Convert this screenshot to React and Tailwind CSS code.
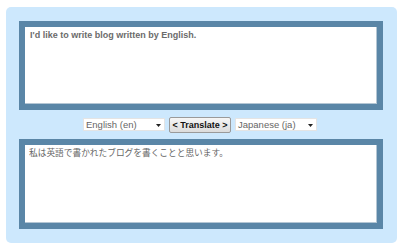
const LANGS_FROM = 'English (en)';
const LANGS_TO = 'Japanese (ja)';

function FakeSelect({ label }) {
  return (
    <div className="flex h-[13px] w-[82px] items-center justify-between border border-[#e4e4e4] bg-white pl-[2px] pr-[3px]">
      <span className="text-[9.5px] leading-[11px] text-[#666]">{label}</span>
      <svg width="5" height="3" viewBox="0 0 5 3" className="mt-[1px]">
        <path d="M0 0h5L2.5 3z" fill="#222" />
      </svg>
    </div>
  );
}

export default function App() {
  return (
    <div className="min-h-[248px] bg-white pl-[6px] pt-[7px] font-['Liberation_Sans','Noto_Sans_CJK_JP',sans-serif]">
      <div className="flex h-[236px] w-[391px] flex-col rounded-[5px] bg-[#cde8fd] pl-[13px] pr-[14px] pt-[14px]">
        {/* source text */}
        <div className="h-[89px] border-[6px] border-[#5a86a7] bg-white px-[5px] pt-[2px] shadow-[inset_-1px_-1px_0_#b4c6d4]">
          <p className="text-[9px] font-bold leading-[12px] text-[#6b6b6b]">
            I'd like to write blog written by English.
          </p>
        </div>

        {/* controls */}
        <div className="flex h-[29px] items-center justify-center gap-[4px] pr-[2px]">
          <FakeSelect label={LANGS_FROM} />
          <button className="flex h-[16px] w-[62px] items-center justify-center rounded-[2px] border border-[#9a9a9a] bg-gradient-to-b from-[#f6f6f6] to-[#dcdcdc] text-[9px] font-bold leading-[10px] text-[#111]">
            &lt; Translate &gt;
          </button>
          <FakeSelect label={LANGS_TO} />
        </div>

        {/* translated text */}
        <div className="h-[90px] border-[6px] border-[#5a86a7] bg-white px-[4px] pt-[2px] shadow-[inset_-1px_-1px_0_#b4c6d4]">
          <p className="text-[8.7px] leading-[12px] text-[#666]">
            私は英語で書かれたブログを書くことと思います。
          </p>
        </div>
      </div>
    </div>
  );
}
